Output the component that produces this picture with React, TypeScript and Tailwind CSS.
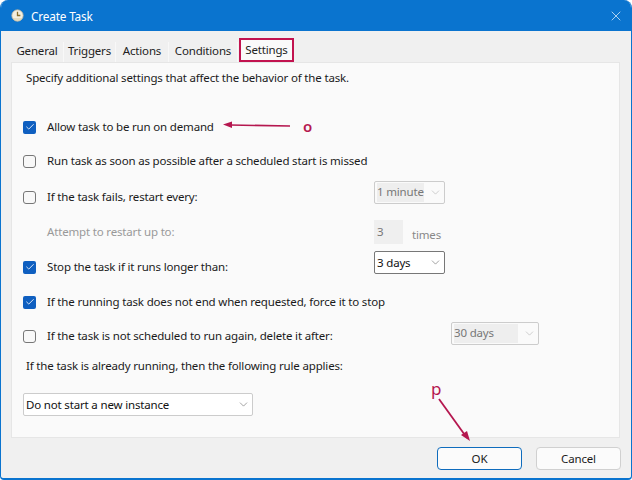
import { Check, ChevronDown, X } from 'lucide-react'

const tabs = [
  { label: 'General', width: 'w-[53px]' },
  { label: 'Triggers', width: 'w-[52px]' },
  { label: 'Actions', width: 'w-[53px]' },
  { label: 'Conditions', width: 'w-[69px]' },
]

const CheckBox = ({ checked }: { checked?: boolean }) =>
  checked ? (
    <span className="flex h-[13px] w-[13px] shrink-0 items-center justify-center rounded-[2px] bg-[#0f5fc0]">
      <Check size={10} strokeWidth={2} className="text-white" />
    </span>
  ) : (
    <span className="h-[13px] w-[13px] shrink-0 rounded-[3px] border border-[#777] bg-[#f8f8f8]" />
  )

const Select = ({
  value,
  width,
  disabled,
  active,
}: {
  value: string
  width: string
  disabled?: boolean
  active?: boolean
}) => (
  <div
    className={`flex h-[23px] shrink-0 items-center rounded-[2px] border pr-[2px] pl-[2px] whitespace-nowrap ${width} ${
      active ? 'border-[#777] bg-white' : disabled ? 'border-[#ccc] bg-[#fafafa]' : 'border-[#ccc] bg-white'
    }`}
  >
    <span
      className={`flex h-[19px] min-w-0 flex-1 items-center ${
        disabled ? 'mr-[5px] bg-[#eeeeee] text-[#777]' : 'text-[#111]'
      }`}
    >
      {value}
    </span>
    <ChevronDown size={13} strokeWidth={1} className={`shrink-0 ${disabled ? 'text-[#aaa]' : 'text-[#555]'}`} />
  </div>
)

const Row = ({ height, children }: { height: string; children?: React.ReactNode }) => (
  <div className={`flex items-center ${height}`}>{children}</div>
)

const Label = ({ text, width }: { text: string; width: string }) => (
  <span className={`ml-[11px] shrink-0 whitespace-nowrap ${width}`}>{text}</span>
)

export default function App() {
  return (
    <div className="relative h-[480px] w-[632px] overflow-hidden rounded-t-[8px] rounded-b-[4px] border-x border-b-2 border-[#0a74cf] bg-[#f0f0f0] font-['Noto_Sans',sans-serif] text-[11.5px] tracking-[-0.17px] text-[#1a1a1a]">
      <div className="flex h-[31px] items-center bg-[#0a74cf] pr-[7px] pl-[10px] text-white">
        <svg width="13" height="13" viewBox="0 0 16 16" className="mr-[7px] shrink-0">
          <circle cx="8" cy="8" r="7" fill="#f4efdf" stroke="#b9b3a0" strokeWidth="1" />
          <path d="M2 11a6.5 6.5 0 0 0 12 0z" fill="#d8cfae" opacity="0.6" />
          <path d="M8 3.5V8H11.5" fill="none" stroke="#8a6f2c" strokeWidth="1.6" />
        </svg>
        <span className="mt-[2px] text-[11.8px]">Create Task</span>
        <X size={16} strokeWidth={1} className="ml-auto" />
      </div>

      <div className="flex h-[31px] items-end pl-[10px]">
        {tabs.map((tab) => (
          <div
            key={tab.label}
            className={`flex h-[20px] items-start justify-center border-r border-[#f8f8f8] bg-[#f0f0f0] text-[#222] ${tab.width}`}
          >
            {tab.label}
          </div>
        ))}
        <div className="z-10 ml-[1px] flex h-[24px] w-[55px] items-center justify-center border-2 border-[#c2134f] bg-[#fafafa] text-[#222]">
          Settings
        </div>
      </div>

      <div className="mr-[11px] ml-[10px] h-[376px] border border-[#e6e6e6] bg-[#fafafa] pl-[11px]">
        <Row height="h-[30px]">
          <span className="ml-[3px]">Specify additional settings that affect the behavior of the task.</span>
        </Row>
        <Row height="h-[20px]" />
        <Row height="h-[28px]">
          <CheckBox checked />
          <Label text="Allow task to be run on demand" width="w-[320px]" />
        </Row>
        <Row height="h-[40px]">
          <CheckBox />
          <Label text="Run task as soon as possible after a scheduled start is missed" width="w-[320px]" />
        </Row>
        <Row height="h-[32px]">
          <CheckBox />
          <Label text="If the task fails, restart every:" width="w-[327px]" />
          <div className="mb-[10px]">
            <Select value="1 minute" width="w-[71px]" disabled />
          </div>
        </Row>
        <Row height="h-[38px]">
          <span className="ml-[24px] w-[327px] shrink-0 text-[#999]">Attempt to restart up to:</span>
          <span className="flex h-[24px] w-[29px] shrink-0 items-center bg-[#efefef] pl-[3px] text-[#777]">3</span>
          <span className="mt-[5px] ml-[9px] text-[#888]">times</span>
        </Row>
        <Row height="h-[32px]">
          <CheckBox checked />
          <Label text="Stop the task if it runs longer than:" width="w-[327px]" />
          <div className="mb-[9px]">
            <Select value="3 days" width="w-[71px]" active />
          </div>
        </Row>
        <Row height="h-[38px]">
          <CheckBox checked />
          <Label text="If the running task does not end when requested, force it to stop" width="w-[340px]" />
        </Row>
        <Row height="h-[30px]">
          <CheckBox />
          <Label text="If the task is not scheduled to run again, delete it after:" width="w-[404px]" />
          <div className="mb-[6px]">
            <Select value="30 days" width="w-[88px]" disabled />
          </div>
        </Row>
        <Row height="h-[30px]">
          <span className="ml-[3px]">If the task is already running, then the following rule applies:</span>
        </Row>
        <div className="mt-[12px]">
          <Select value="Do not start a new instance" width="w-[230px]" />
        </div>
      </div>

      <div className="mt-[9px] mr-[10px] flex justify-end gap-[14px]">
        <button className="h-[23px] w-[85px] rounded-[4px] border border-[#0f6cbd] bg-[#fbfbfb] text-[#1a1a1a]">OK</button>
        <button className="h-[23px] w-[85px] rounded-[4px] border border-[#d0d0d0] bg-[#fbfbfb] text-[#1a1a1a]">Cancel</button>
      </div>

      {/* annotations drawn over the dialog */}
      <svg width="632" height="480" viewBox="0 0 632 480" className="pointer-events-none absolute top-0 left-[-1px]">
        <path d="M290 126 L230 125" stroke="#b5174f" strokeWidth="1.6" fill="none" />
        <path d="M223 124.5 L232 121.5 L232 128 Z" fill="#b5174f" />
        <path d="M439 399 L467 438" stroke="#b5174f" strokeWidth="1.8" fill="none" />
        <path d="M470 441 L461 435 L467 431 Z" fill="#b5174f" />
      </svg>
      <span className="absolute top-[117px] left-[302px] text-[15px] leading-[18px] font-semibold text-[#b5174f]">o</span>
      <span className="absolute top-[379px] left-[430px] text-[17px] leading-[20px] text-[#b5174f]">p</span>
    </div>
  )
}
